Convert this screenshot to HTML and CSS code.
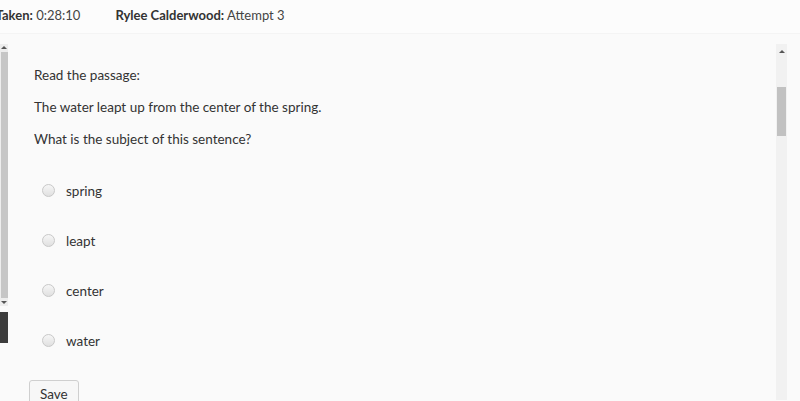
FILE: index.html
```html
<!DOCTYPE html>
<html lang="en">
<head>
    <meta charset="UTF-8">
    <title>Quiz Attempt</title>
    <link rel="stylesheet" href="styles.css">
</head>
<body>
    <div class="topbar">
        <div class="meta meta-time"><b>Time Taken:</b> 0:28:10</div>
        <div class="meta"><b>Rylee Calderwood:</b> Attempt 3</div>
    </div>

    <div class="frame">
        <div class="side">
            <div class="side-scroll">
                <span class="arrow up"></span>
                <div class="side-thumb"></div>
                <span class="arrow down"></span>
            </div>
            <div class="side-block"></div>
        </div>

        <div class="panel">
            <p class="line">Read the passage:</p>
            <p class="line">The water leapt up from the center of the spring.</p>
            <p class="line">What is the subject of this sentence?</p>

            <div class="answers">
                <label class="answer"><span class="radio"></span>spring</label>
                <label class="answer"><span class="radio"></span>leapt</label>
                <label class="answer"><span class="radio"></span>center</label>
                <label class="answer"><span class="radio"></span>water</label>
            </div>

            <button class="save">Save</button>
        </div>

        <div class="scrollbar">
            <span class="arrow up"></span>
            <div class="thumb"></div>
        </div>
    </div>
</body>
</html>
```

FILE: styles.css
```css
* {
    margin: 0;
    padding: 0;
    box-sizing: border-box;
}

body {
    background: #fafafa;
    font-family: Lato, "Open Sans", sans-serif;
    color: #333;
    overflow: hidden;
    height: 401px;
}

.topbar {
    height: 34px;
    display: flex;
    align-items: center;
    gap: 35px;
    padding-bottom: 4px;
    border-bottom: 1px solid #f4f4f4;
    background: #fcfcfc;
    font-size: 13px;
}

.meta-time {
    margin-left: -36px;
}

.meta b {
    font-weight: 700;
    color: #333;
}

.meta {
    color: #444;
}

.frame {
    display: flex;
    margin-top: 10px;
    height: 356px;
}

.side {
    width: 8px;
    display: flex;
    flex-direction: column;
}

.side-scroll {
    height: 262px;
    background: #ededed;
    display: flex;
    flex-direction: column;
    align-items: center;
    padding: 2px 0;
}

.side-thumb {
    flex: 1;
    width: 7px;
    margin: 3px 0;
    background: #c6c6c6;
}

.side-block {
    margin-top: 6px;
    height: 31px;
    background: #3c3c3c;
}

.arrow {
    width: 0;
    height: 0;
    border-left: 3px solid transparent;
    border-right: 3px solid transparent;
}

.arrow.up {
    border-bottom: 3px solid #555;
}

.arrow.down {
    border-top: 3px solid #555;
}

.panel {
    flex: 1;
    padding: 21px 0 0 26px;
    font-size: 13.5px;
}

.line {
    line-height: 20px;
    margin-bottom: 12px;
    color: #333;
}

.answers {
    margin-top: 32px;
    display: flex;
    flex-direction: column;
    gap: 30px;
}

.answer {
    display: flex;
    align-items: center;
    height: 20px;
    padding-left: 8px;
    color: #333;
}

.radio {
    width: 13px;
    height: 13px;
    border-radius: 50%;
    border: 1px solid #c8c8c8;
    background: linear-gradient(#f6f6f6, #e0e0e0);
    margin-right: 11px;
    margin-top: -2px;
}

.save {
    margin-top: 29px;
    margin-left: -5px;
    padding: 5px 10px 8px;
    font-family: inherit;
    font-size: 13.5px;
    color: #333;
    background: #f7f7f7;
    border: 1px solid #cfcfcf;
    border-radius: 3px;
}

.scrollbar {
    width: 11px;
    margin-right: 13px;
    background: #f1f1f1;
    display: flex;
    flex-direction: column;
    align-items: center;
    padding-top: 6px;
}

.thumb {
    width: 9px;
    height: 49px;
    margin-top: 34px;
    background: #c1c1c1;
}
```
